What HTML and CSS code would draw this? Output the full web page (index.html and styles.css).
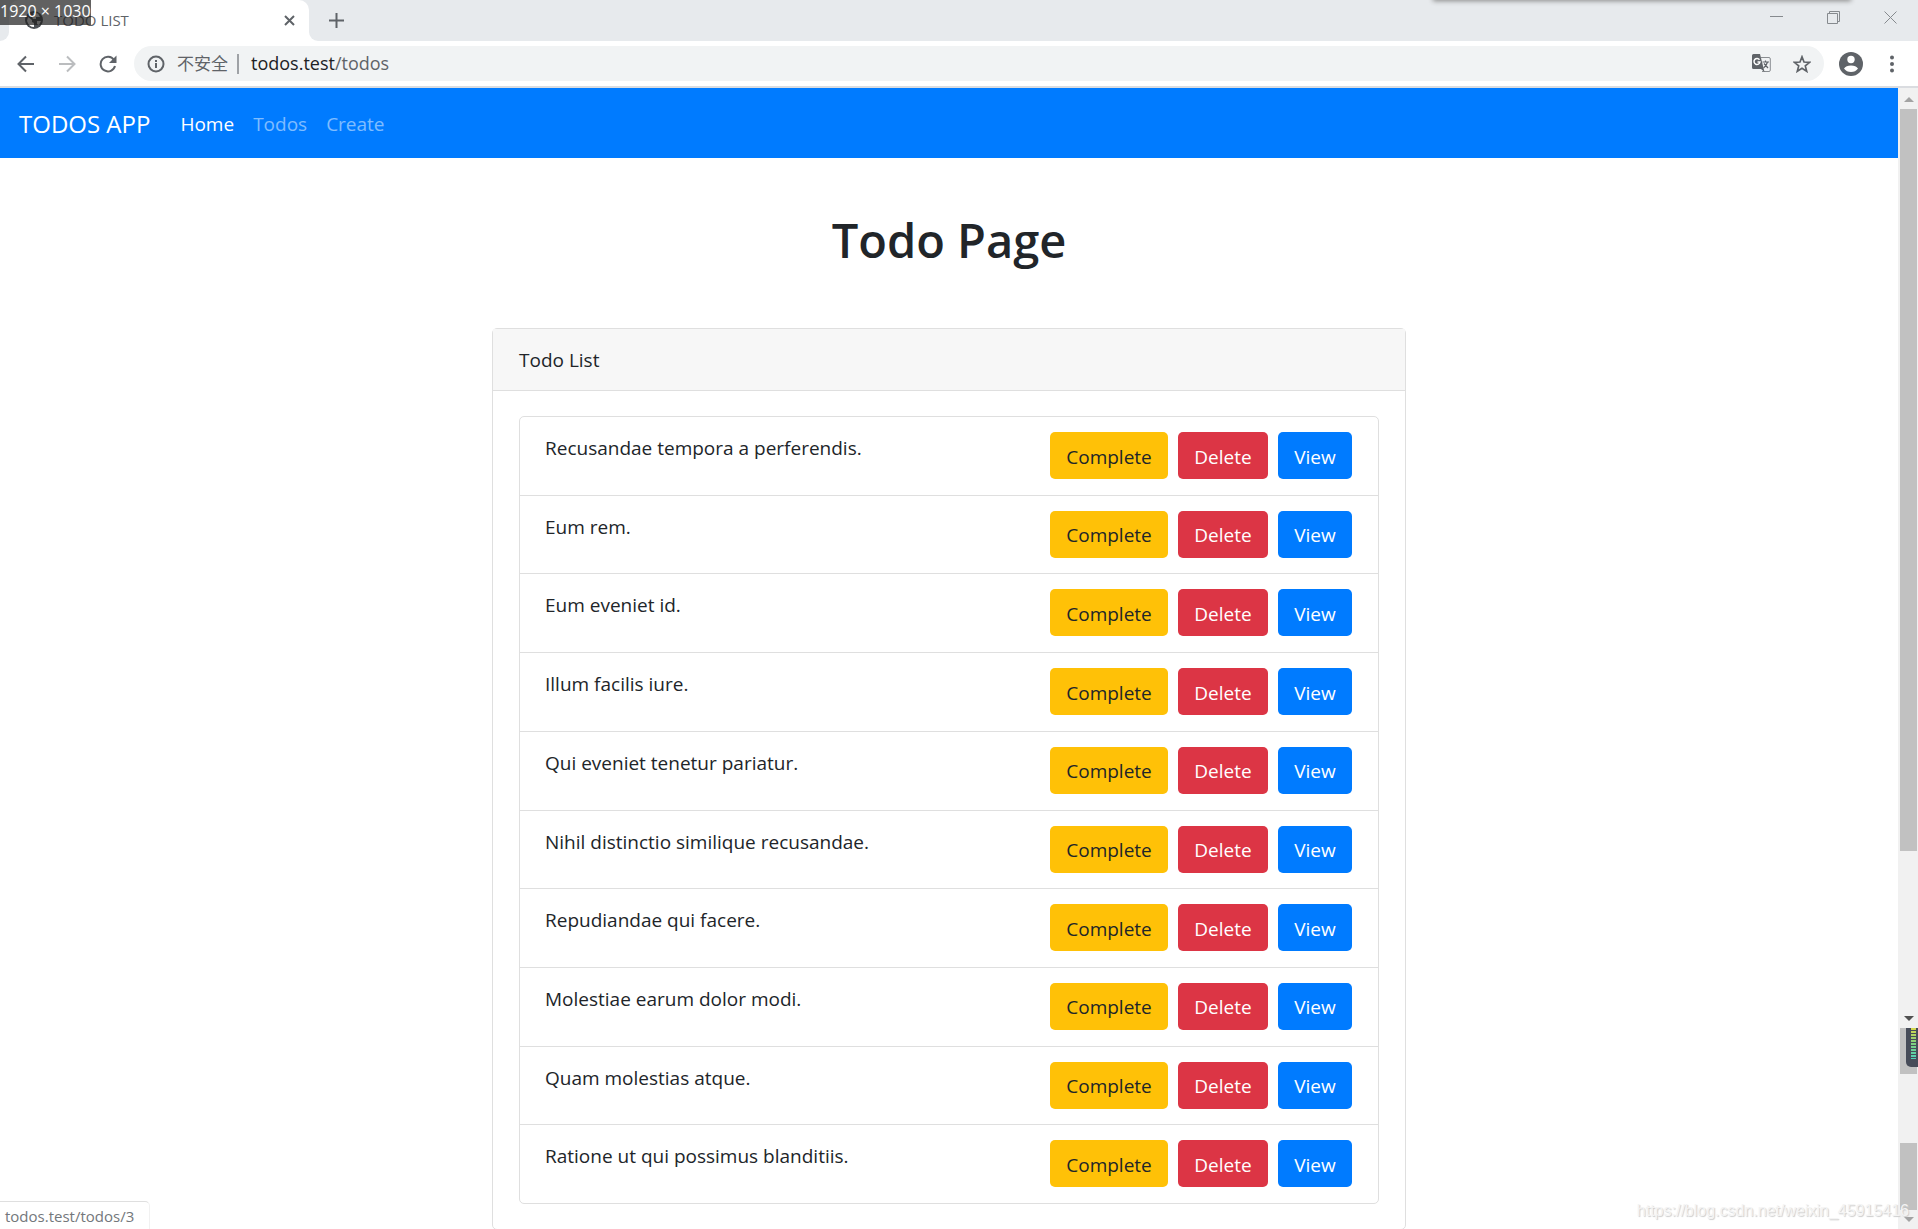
FILE: index.html
```html
<!DOCTYPE html>
<html lang="en">
<head>
<meta charset="utf-8">
<title>TODO LIST</title>
<link rel="stylesheet" href="styles.css">
</head>
<body>
<div class="browser">
  <header class="tabstrip">
    <div class="tab-edge tab-edge-left"></div>
    <div class="tab">
      <svg class="globe" width="18" height="18" viewBox="0 0 18 18"><circle cx="9" cy="9" r="9" fill="#4d5156"/><path d="M3 6 L7 9 L7 11 L9 12 L9 16 Q4 16 2 10 Z M8 2 L13 2.500 L15 6 L11 6 L11 8 L8 8 L7 6 L9 5 Z M12 10 L16 10 L14 14 L12 13 Z" fill="#fff"/></svg>
      <span class="tab-title">TODO LIST</span>
      <button class="icon-btn" aria-label="Close tab"><svg width="11" height="11" viewBox="0 0 11 11"><path d="M1 1 L10 10 M10 1 L1 10" stroke="#5f6368" stroke-width="2"/></svg></button>
    </div>
    <div class="tab-edge tab-edge-right"></div>
    <button class="icon-btn new-tab" aria-label="New tab"><svg width="15" height="15" viewBox="0 0 15 15"><path d="M7.500 0 V15 M0 7.500 H15" stroke="#5f6368" stroke-width="2"/></svg></button>
    <div class="window-controls">
      <button class="icon-btn" aria-label="Minimize"><svg width="13" height="13" viewBox="0 0 13 13"><path d="M0 5.500 H13" stroke="#868a8e"/></svg></button>
      <button class="icon-btn" aria-label="Restore"><svg width="13" height="13" viewBox="0 0 13 13"><path d="M.5 2.500 H10.500 V12.500 H.5 Z M2.500 2.500 V.5 H12.500 V10.500 H10.500" fill="none" stroke="#868a8e"/></svg></button>
      <button class="icon-btn" aria-label="Close"><svg width="13" height="13" viewBox="0 0 13 13"><path d="M.5 .5 L12.500 12.500 M12.500 .5 L.5 12.500" stroke="#868a8e"/></svg></button>
    </div>
    <div class="top-shadow"></div>
    <div class="size-badge">1920 × 1030</div>
  </header>
  <div class="toolbar">
    <div class="nav-buttons">
      <button class="icon-btn" aria-label="Back"><svg width="18" height="18" viewBox="0 0 18 18"><path d="M17 9 H2 M9 1.500 L1.500 9 L9 16.500" fill="none" stroke="#5f6368" stroke-width="2"/></svg></button>
      <button class="icon-btn" aria-label="Forward"><svg width="18" height="18" viewBox="0 0 18 18"><path d="M1 9 H16 M9 1.500 L16.500 9 L9 16.500" fill="none" stroke="#bbbdbf" stroke-width="2"/></svg></button>
      <button class="icon-btn" aria-label="Reload"><svg width="18" height="18" viewBox="0 0 18 18"><path d="M15 5 A7.300 7.300 0 1 0 16 11" fill="none" stroke="#5f6368" stroke-width="2"/><path d="M17.500 .5 V8 H10 Z" fill="#5f6368"/></svg></button>
    </div>
    <div class="omnibox">
      <svg width="18" height="18" viewBox="0 0 18 18"><circle cx="9" cy="9" r="7.500" fill="none" stroke="#5f6368" stroke-width="2"/><path d="M8 8 H10 V13 H8 Z M8 5 H10 V7 H8 Z" fill="#5f6368"/></svg>
      <span class="insecure" lang="zh">不安全</span>
      <span class="divider"></span>
      <span class="url"><span class="host">todos.test</span>/todos</span>
      <button class="icon-btn" aria-label="Translate"><svg width="19" height="19" viewBox="0 0 19 19"><path d="M9 3.500 H17 Q18.300 3.500 18.300 5 V16 Q18.300 17.500 17 17.500 H10" fill="#f1f3f4" stroke="#8a8d91"/><path d="M1.500 0 H8 L12.500 18 L9 15 H1.500 Q0 15 0 13.500 V1.500 Q0 0 1.500 0 Z" fill="#5f6368"/><path d="M7.500 5.800 A3 3 0 1 0 8 8 H5.500" fill="none" stroke="#fff" stroke-width="1.500"/><path d="M10.500 8 H17 M13.500 6.500 V8 M15.500 8 Q14.500 12 11.500 14 M12 9.500 L16 14" fill="none" stroke="#5f6368" stroke-width="1.200"/></svg></button>
      <button class="icon-btn" aria-label="Bookmark"><svg width="18" height="18" viewBox="0 0 18 18"><path d="M9 1.800 L11 7 L16.600 7.300 L12.300 10.900 L13.700 16.300 L9 13.300 L4.300 16.300 L5.700 10.900 L1.400 7.300 L7 7 Z" fill="none" stroke="#5f6368" stroke-width="1.700"/></svg></button>
    </div>
    <button class="icon-btn" aria-label="Profile"><svg width="24" height="24" viewBox="0 0 24 24"><circle cx="12" cy="12" r="12" fill="#5f6368"/><circle cx="12" cy="7.500" r="3.700" fill="#fff"/><path d="M5 16.500 Q7 13.500 12 13.500 Q17 13.500 19 16.500 Q16.500 20 12 20 Q7.500 20 5 16.500 Z" fill="#fff"/></svg></button>
    <button class="icon-btn" aria-label="Menu"><svg width="4" height="18" viewBox="0 0 4 18"><g fill="#5f6368"><circle cx="2" cy="2.500" r="2"/><circle cx="2" cy="9" r="2"/><circle cx="2" cy="15.500" r="2"/></g></svg></button>
  </div>
  <div class="viewport">
    <div class="page">
      <nav class="navbar">
        <a class="brand" href="#">TODOS APP</a>
        <a class="nav-link active" href="#">Home</a>
        <a class="nav-link" href="#">Todos</a>
        <a class="nav-link" href="#">Create</a>
      </nav>
      <main class="container">
        <h1>Todo Page</h1>
        <section class="card">
          <div class="card-header">Todo List</div>
          <div class="card-body">
            <ul class="list">
              <li class="item"><span class="name">Recusandae tempora a perferendis.</span><button class="btn complete">Complete</button><button class="btn delete">Delete</button><button class="btn view">View</button></li>
              <li class="item"><span class="name">Eum rem.</span><button class="btn complete">Complete</button><button class="btn delete">Delete</button><button class="btn view">View</button></li>
              <li class="item"><span class="name">Eum eveniet id.</span><button class="btn complete">Complete</button><button class="btn delete">Delete</button><button class="btn view">View</button></li>
              <li class="item"><span class="name">Illum facilis iure.</span><button class="btn complete">Complete</button><button class="btn delete">Delete</button><button class="btn view">View</button></li>
              <li class="item"><span class="name">Qui eveniet tenetur pariatur.</span><button class="btn complete">Complete</button><button class="btn delete">Delete</button><button class="btn view">View</button></li>
              <li class="item"><span class="name">Nihil distinctio similique recusandae.</span><button class="btn complete">Complete</button><button class="btn delete">Delete</button><button class="btn view">View</button></li>
              <li class="item"><span class="name">Repudiandae qui facere.</span><button class="btn complete">Complete</button><button class="btn delete">Delete</button><button class="btn view">View</button></li>
              <li class="item"><span class="name">Molestiae earum dolor modi.</span><button class="btn complete">Complete</button><button class="btn delete">Delete</button><button class="btn view">View</button></li>
              <li class="item"><span class="name">Quam molestias atque.</span><button class="btn complete">Complete</button><button class="btn delete">Delete</button><button class="btn view">View</button></li>
              <li class="item"><span class="name">Ratione ut qui possimus blanditiis.</span><button class="btn complete">Complete</button><button class="btn delete">Delete</button><button class="btn view">View</button></li>
            </ul>
          </div>
        </section>
      </main>
    </div>
    <div class="scrollbar">
      <svg class="arrow" width="10" height="5" viewBox="0 0 10 5"><path d="M0 5 L5 0 L10 5 Z" fill="#a3a3a3"/></svg>
      <div class="thumb thumb-main"></div>
      <svg class="arrow arrow-mid" width="10" height="5" viewBox="0 0 10 5"><path d="M0 0 L5 5 L10 0 Z" fill="#505050"/></svg>
      <div class="thumb thumb-mid"></div>
      <div class="thumb thumb-low"></div>
      <svg class="arrow arrow-low" width="10" height="5" viewBox="0 0 10 5"><path d="M0 0 L5 5 L10 0 Z" fill="#a3a3a3"/></svg>
      <div class="meter"><div class="meter-bars"></div></div>
    </div>
    <div class="status">todos.test/todos/3</div>
    <div class="watermark">https://blog.csdn.net/weixin_45915416</div>
  </div>
</div>
</body>
</html>
```
FILE: styles.css
```css
* { box-sizing: border-box; }

body {
  margin: 0;
  font-family: "Open Sans", "Noto Sans CJK SC", sans-serif;
  font-size: 19px;
  line-height: 30px;
  color: #212529;
  background: #fff;
}

a { text-decoration: none; }
svg { display: block; }

.browser {
  display: flex;
  flex-direction: column;
  height: 100vh;
  overflow: hidden;
}

.icon-btn {
  display: flex;
  flex: none;
  padding: 0;
  border: 0;
  background: none;
}

/* Tab strip */
.tabstrip {
  position: relative;
  display: flex;
  flex: none;
  height: 41px;
  background: linear-gradient(#fff, #fff) 0 0 / 318px 41px no-repeat #e7eaed;
}

.tab-edge { width: 9px; background: #e7eaed; }
.tab-edge-left { border-bottom-right-radius: 9px; }
.tab-edge-right { border-bottom-left-radius: 9px; }

.tab {
  display: flex;
  align-items: center;
  width: 300px;
  padding: 0 14px 1px 16px;
  border-radius: 10px 10px 0 0;
  box-shadow: 0 -9px 0 #e7eaed;
}

.tab-title {
  flex: 1;
  padding: 0 11px;
  font-size: 15px;
  line-height: 32px;
  color: #5f6368;
}

.new-tab { margin: 13px 0 0 11px; align-self: flex-start; }

.window-controls {
  display: flex;
  gap: 44px;
  margin-left: auto;
  padding: 11px 21px 0 0;
}

.top-shadow {
  position: absolute;
  top: -4px;
  right: 68px;
  width: 416px;
  height: 4px;
  box-shadow: 0 0 5px 1px #888;
}

.size-badge {
  position: absolute;
  top: 0;
  left: 0;
  width: 91px;
  height: 25px;
  font-size: 16px;
  line-height: 22px;
  white-space: nowrap;
  color: #fff;
  background: rgba(30, 30, 30, .7);
}

/* Address row */
.toolbar {
  display: flex;
  flex: none;
  align-items: center;
  gap: 27px;
  height: 47px;
  padding: 0 24px 0 17px;
  border-bottom: 2px solid #dadce0;
}

.nav-buttons { display: flex; gap: 23px; margin-right: -10px; }

.omnibox {
  display: flex;
  flex: 1;
  align-items: center;
  height: 35px;
  margin-right: -12px;
  padding: 0 13px;
  border-radius: 18px;
  background: #f1f3f4;
  font-size: 17px;
  color: #5f6368;
}

.insecure { padding: 0 9px 0 12px; }
.divider { width: 2px; height: 20px; background: #9fa2a6; }
.url { flex: 1; padding: 0 0 2px 12px; font-size: 18px; }
.host { color: #202124; }
.omnibox .icon-btn + .icon-btn { margin-left: 22px; }

/* Page area */
.viewport {
  position: relative;
  display: flex;
  flex: 1;
  min-height: 0;
}

.page { flex: 1; overflow: hidden; }

.navbar {
  display: flex;
  align-items: center;
  gap: 19px;
  height: 70px;
  padding: 2px 19px 0;
  background: #007bff;
}

.brand { margin-right: 11px; font-size: 24px; color: #fff; }
.nav-link { color: rgba(255, 255, 255, .5); }
.nav-link.active { color: #fff; }

.container { width: 914px; max-width: 100%; margin: 0 auto; }

h1 {
  margin: 0;
  padding: 52px 0 58px;
  font-size: 47px;
  line-height: 60px;
  font-weight: 600;
  text-align: center;
}

.card { border: 1px solid #dfdfdf; border-radius: 5px; }

.card-header {
  padding: 16px 26px 15px;
  border-bottom: 1px solid #dfdfdf;
  background: #f7f7f7;
}

.card-body { padding: 25px 26px; }

.list {
  display: flex;
  flex-direction: column;
  min-height: 788px;
  margin: 0;
  padding: 0;
  list-style: none;
  border: 1px solid #dfdfdf;
  border-radius: 5px;
}

.item {
  display: flex;
  flex: 1;
  align-items: flex-start;
  gap: 10px;
  padding: 15px 26px 0 25px;
}

.item + .item { border-top: 1px solid #dfdfdf; }
.name { flex: 1; line-height: 32px; }

.btn {
  height: 47px;
  padding: 2px 0 0;
  border: 0;
  border-radius: 5px;
  font: inherit;
  color: #fff;
}

.complete { width: 118px; background: #ffc107; color: #212529; }
.delete { width: 90px; background: #dc3545; }
.view { width: 74px; background: #007bff; }

/* Scrollbar column */
.scrollbar {
  position: relative;
  display: flex;
  flex: none;
  flex-direction: column;
  width: 20px;
  padding: 9px 1px 7px 2px;
  background: #f1f1f1;
}

.arrow { flex: none; align-self: center; }
.thumb { background: #c1c1c1; }
.thumb-main { flex: 742; margin-top: 7px; }
.arrow-mid { margin-top: 165px; }
.thumb-mid { flex: 46; margin-top: 7px; }
.thumb-low { flex: 67; margin-top: 69px; }
.arrow-low { margin-top: 7px; }

/* Audio meter docked at the screen edge */
.meter {
  position: absolute;
  right: 0;
  bottom: 162px;
  width: 12px;
  height: 39px;
  padding: 0 2px 8px 5px;
  border-radius: 0 0 0 5px;
  background: #474c59;
}

.meter-bars {
  height: 100%;
  background: repeating-linear-gradient(transparent 0 2px, #474c59 2px 3px), linear-gradient(#d8d84c, #7fcf7f 50%, #4fd0b8);
}

.status {
  position: absolute;
  left: 0;
  bottom: 0;
  width: 150px;
  height: 28px;
  padding-left: 5px;
  border-top: 1px solid #dfdfdf;
  border-right: 1px solid #f1f1f1;
  border-top-right-radius: 5px;
  font-size: 15px;
  line-height: 28px;
  color: #73777b;
  background: #fff;
}

.watermark {
  position: absolute;
  right: 9px;
  bottom: 8px;
  font-family: "Liberation Sans", sans-serif;
  font-size: 16px;
  line-height: 20px;
  color: #f4f4f4;
  text-shadow: 1px 1px 1px #ccc;
}
```
